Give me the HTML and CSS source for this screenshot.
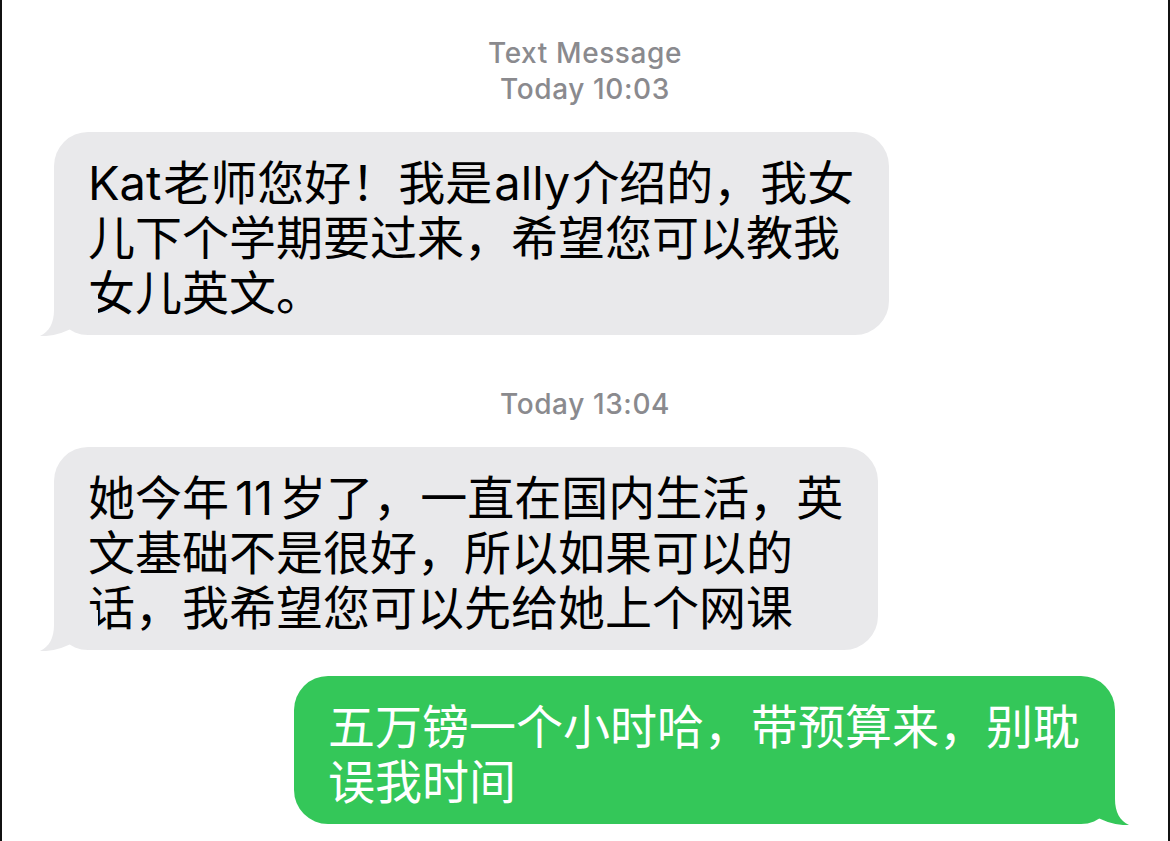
FILE: index.html
```html
<!DOCTYPE html>
<html lang="zh">
<head>
<meta charset="utf-8">
<title>Messages</title>
<link rel="stylesheet" href="styles.css">
</head>
<body>
<main class="chat">
  <div class="stamp stamp-first">
    <div>Text Message</div>
    <div>Today 10:03</div>
  </div>
  <div class="bubble in">
    <span class="lines"><span class="latin lead">Kat</span>老师您好！我是<span class="latin">ally</span>介绍的，我女<br>儿下个学期要过来，希望您可以教我<br>女儿英文。</span>
    <svg class="tail" viewBox="-16 -40 60 42" aria-hidden="true"><path d="M0 -40 L0 -25 C0 -12 -5 -3 -14 1 C-4 1.5 8 -1 18 -7 C25 -2 32 0 44 0 L44 -40 Z"/></svg>
  </div>
  <div class="stamp stamp-second">
    <div>Today 13:04</div>
  </div>
  <div class="bubble in">
    <span class="lines">她今年<span class="latin num">11</span>岁了，一直在国内生活，英<br>文基础不是很好，所以如果可以的<br>话，我希望您可以先给她上个网课</span>
    <svg class="tail" viewBox="-16 -40 60 42" aria-hidden="true"><path d="M0 -40 L0 -25 C0 -12 -5 -3 -14 1 C-4 1.5 8 -1 18 -7 C25 -2 32 0 44 0 L44 -40 Z"/></svg>
  </div>
  <div class="bubble out">
    <span class="lines">五万镑一个小时哈，带预算来，别耽<br>误我时间</span>
    <svg class="tail" viewBox="-16 -40 60 42" aria-hidden="true"><path d="M0 -40 L0 -25 C0 -12 -5 -3 -14 1 C-4 1.5 8 -1 18 -7 C25 -2 32 0 44 0 L44 -40 Z"/></svg>
  </div>
</main>
</body>
</html>
```
FILE: styles.css
```css
html, body {
  margin: 0;
  padding: 0;
  background: #ffffff;
}

body {
  height: 841px;
  box-sizing: border-box;
  border-left: 2px solid #111;
  border-right: 2px solid #111;
  overflow: hidden;
  font-family: "Inter", "Noto Sans CJK SC", sans-serif;
}

.chat {
  display: flex;
  flex-direction: column;
}

.stamp {
  text-align: center;
  color: #8a8a8e;
  font-size: 28px;
  font-weight: 500;
  line-height: 36px;
  letter-spacing: 0.6px;
}

.stamp-first {
  padding-top: 35px;
  margin-bottom: 25px;
}

.stamp-second {
  margin-top: 51px;
  margin-bottom: 25px;
}

.bubble {
  position: relative;
  box-sizing: border-box;
  width: fit-content;
  padding: 23px 35px 15px 34px;
  border-radius: 34px;
  font-size: 47px;
  line-height: 55px;
  white-space: nowrap;
}

.latin {
  margin: 0 2px;
}

.latin.lead {
  margin-left: 0;
}

.latin.num {
  margin: 0 6px;
}

.bubble.in {
  align-self: flex-start;
  margin-left: 52px;
  background: #e9e9eb;
  color: #000;
}

.bubble.out {
  align-self: flex-end;
  margin-top: 26px;
  margin-right: 53px;
  background: #34c759;
  color: #fff;
}

.tail {
  position: absolute;
  bottom: -2px;
  width: 60px;
  height: 42px;
}

.bubble.in .tail {
  left: -16px;
  fill: #e9e9eb;
}

.bubble.out .tail {
  right: -16px;
  fill: #34c759;
  transform: scaleX(-1);
}
```
